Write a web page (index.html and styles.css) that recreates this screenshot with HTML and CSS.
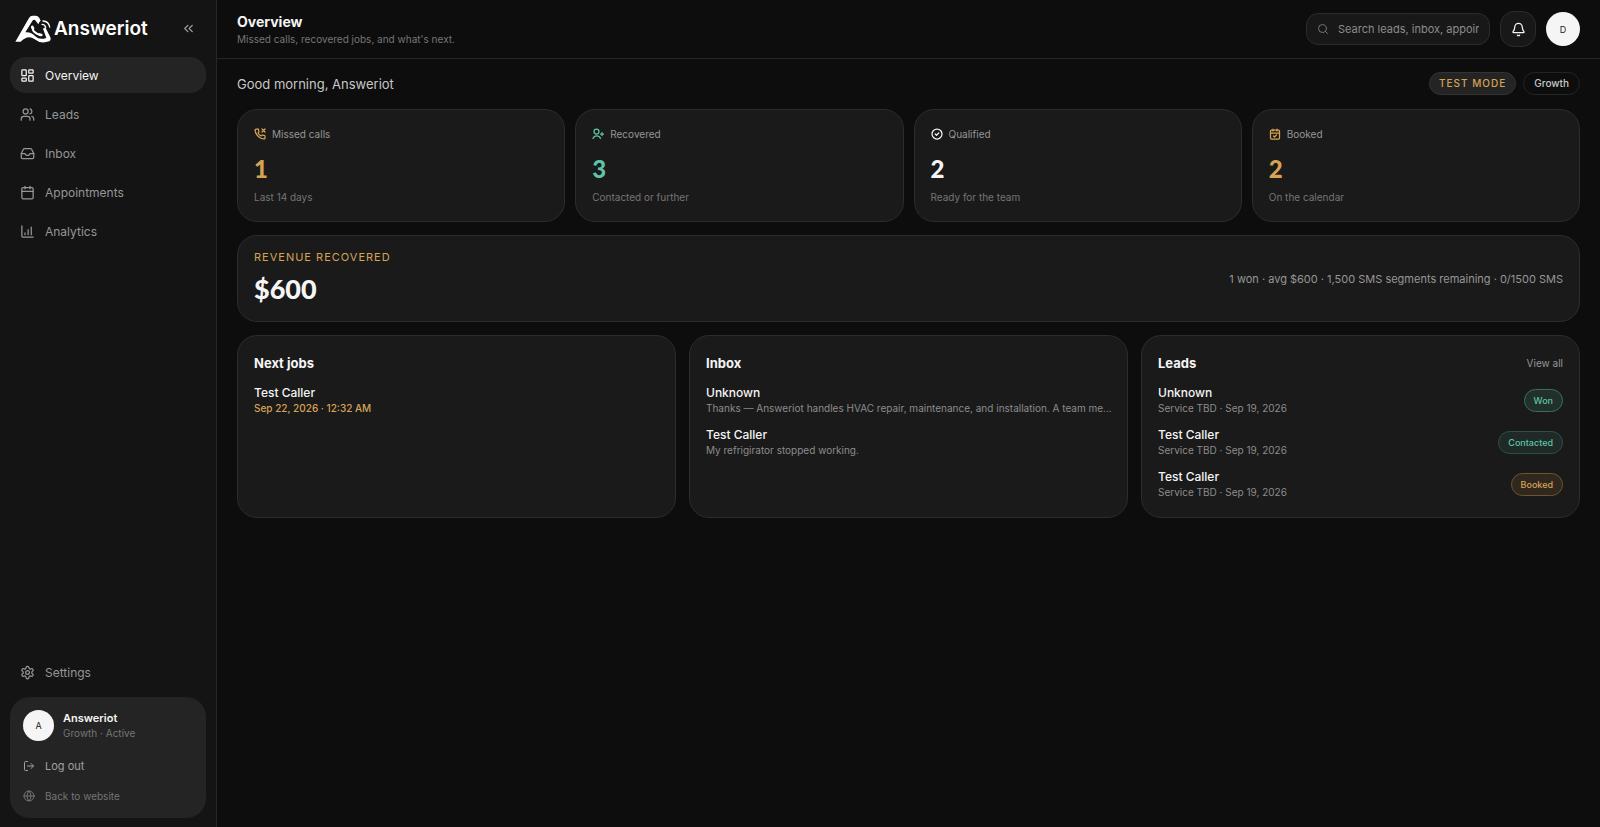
FILE: index.html
```html
<!DOCTYPE html>
<html lang="en">
<head>
  <meta charset="UTF-8" />
  <meta name="viewport" content="width=device-width, initial-scale=1.0"/>
  <title>Overview - Answeriot</title>
  <link rel="stylesheet" href="styles.css">
</head>
<body>

  <aside class="sidebar">
    <div class="brand">
      <a href="#" class="logo">
        <svg class="logo-mark" viewBox="45 43 108 84" aria-hidden="true">
          <path fill="#fff" d="M46 123 L87 52 Q91 45 98 45 H107 Q114 45 118 52 L122 60 Q117 64 115 71 L107 60 Q102 54 97 61 L76 95 Q93 93 106 107 Q118 119 139 112 L129 84 L136 80 L151 110 Q154 118 148 122 Q122 131 104 116 Q84 100 62 123 Z"/>
          <path fill="none" stroke="#fff" stroke-width="6" stroke-linecap="round" d="M97 80 Q99 98 122 103"/>
          <path fill="none" stroke="#fff" stroke-width="8" stroke-linecap="round" d="M97 79 L99 83 M119 102 L124 103"/>
          <path fill="none" stroke="#fff" stroke-width="4" stroke-linecap="round" d="M126 71 Q135 71 137 80 M129 61 Q146 62 149 79"/>
        </svg>
        <span>Answeriot</span>
      </a>
      <button class="collapse" aria-label="Collapse sidebar">
        <svg class="icon" viewBox="0 0 24 24"><path d="m11 17-5-5 5-5M18 17l-5-5 5-5"/></svg>
      </button>
    </div>

    <nav class="nav">
      <a href="#" class="nav-item active">
        <svg class="icon" viewBox="0 0 24 24"><rect x="3" y="3" width="7" height="9" rx="1"/><rect x="14" y="3" width="7" height="5" rx="1"/><rect x="14" y="12" width="7" height="9" rx="1"/><rect x="3" y="16" width="7" height="5" rx="1"/></svg>
        Overview
      </a>
      <a href="#" class="nav-item">
        <svg class="icon" viewBox="0 0 24 24"><path d="M16 21v-2a4 4 0 0 0-4-4H6a4 4 0 0 0-4 4v2M22 21v-2a4 4 0 0 0-3-3.87M16 3.13a4 4 0 0 1 0 7.75"/><circle cx="9" cy="7" r="4"/></svg>
        Leads
      </a>
      <a href="#" class="nav-item">
        <svg class="icon" viewBox="0 0 24 24"><path d="M22 12h-6l-2 3h-4l-2-3H2"/><path d="M5.45 5.11 2 12v6a2 2 0 0 0 2 2h16a2 2 0 0 0 2-2v-6l-3.45-6.89A2 2 0 0 0 16.76 4H7.24a2 2 0 0 0-1.79 1.11z"/></svg>
        Inbox
      </a>
      <a href="#" class="nav-item">
        <svg class="icon" viewBox="0 0 24 24"><path d="M8 2v4M16 2v4M3 10h18"/><rect x="3" y="4" width="18" height="18" rx="2"/></svg>
        Appointments
      </a>
      <a href="#" class="nav-item">
        <svg class="icon" viewBox="0 0 24 24"><path d="M3 3v16a2 2 0 0 0 2 2h16M8 17v-3M13 17V9M18 17V5"/></svg>
        Analytics
      </a>
    </nav>

    <a href="#" class="nav-item settings">
      <svg class="icon" viewBox="0 0 24 24"><path d="M12.22 2h-.44a2 2 0 0 0-2 2v.18a2 2 0 0 1-1 1.73l-.43.25a2 2 0 0 1-2 0l-.15-.08a2 2 0 0 0-2.73.73l-.22.38a2 2 0 0 0 .73 2.73l.15.1a2 2 0 0 1 1 1.72v.51a2 2 0 0 1-1 1.74l-.15.09a2 2 0 0 0-.73 2.73l.22.38a2 2 0 0 0 2.73.73l.15-.08a2 2 0 0 1 2 0l.43.25a2 2 0 0 1 1 1.73V20a2 2 0 0 0 2 2h.44a2 2 0 0 0 2-2v-.18a2 2 0 0 1 1-1.73l.43-.25a2 2 0 0 1 2 0l.15.08a2 2 0 0 0 2.73-.73l.22-.39a2 2 0 0 0-.73-2.73l-.15-.08a2 2 0 0 1-1-1.74v-.5a2 2 0 0 1 1-1.74l.15-.09a2 2 0 0 0 .73-2.73l-.22-.38a2 2 0 0 0-2.73-.73l-.15.08a2 2 0 0 1-2 0l-.43-.25a2 2 0 0 1-1-1.73V4a2 2 0 0 0-2-2z"/><circle cx="12" cy="12" r="3"/></svg>
      Settings
    </a>

    <div class="account">
      <div class="account-head">
        <span class="avatar">A</span>
        <div>
          <div class="account-name">Answeriot</div>
          <div class="account-plan">Growth · Active</div>
        </div>
      </div>
      <button class="account-link logout">
        <svg class="icon" viewBox="0 0 24 24"><path d="M9 21H5a2 2 0 0 1-2-2V5a2 2 0 0 1 2-2h4M16 17l5-5-5-5M21 12H9"/></svg>
        Log out
      </button>
      <a href="#" class="account-link website">
        <svg class="icon" viewBox="0 0 24 24"><circle cx="12" cy="12" r="10"/><path d="M12 2a14.5 14.5 0 0 0 0 20 14.5 14.5 0 0 0 0-20M2 12h20"/></svg>
        Back to website
      </a>
    </div>
  </aside>

  <div class="page">
    <header class="topbar">
      <div class="heading">
        <h1>Overview</h1>
        <p class="subtitle">Missed calls, recovered jobs, and what's next.</p>
      </div>
      <div class="tools">
        <label class="search">
          <svg class="icon" viewBox="0 0 24 24"><circle cx="11" cy="11" r="8"/><path d="m21 21-4.3-4.3"/></svg>
          <input type="text" aria-label="Search" placeholder="Search leads, inbox, appointments">
        </label>
        <button class="bell" aria-label="Notifications">
          <svg class="icon" viewBox="0 0 24 24"><path d="M10.27 21a2 2 0 0 0 3.46 0M3.26 15.33A1 1 0 0 0 4 17h16a1 1 0 0 0 .74-1.67C19.41 13.96 18 12.5 18 8A6 6 0 0 0 6 8c0 4.5-1.41 5.96-2.74 7.33"/></svg>
        </button>
        <button class="avatar user">D</button>
      </div>
    </header>

    <main class="content">
      <div class="greeting">
        <p>Good morning, Answeriot</p>
        <div class="tags">
          <span class="tag tag-test">TEST MODE</span>
          <span class="tag">Growth</span>
        </div>
      </div>

      <section class="stats">
        <div class="card stat amber">
          <div class="stat-label">
            <svg class="icon" viewBox="0 0 24 24"><path d="m16 2 6 6M22 2l-6 6M22 16.92v3a2 2 0 0 1-2.18 2 19.79 19.79 0 0 1-8.63-3.07 19.5 19.5 0 0 1-6-6 19.79 19.79 0 0 1-3.07-8.67A2 2 0 0 1 4.11 2h3a2 2 0 0 1 2 1.72c.13.96.36 1.9.7 2.81a2 2 0 0 1-.45 2.11L8.09 9.91a16 16 0 0 0 6 6l1.27-1.27a2 2 0 0 1 2.11-.45c.91.34 1.85.57 2.81.7A2 2 0 0 1 22 16.92z"/></svg>
            Missed calls
          </div>
          <div class="stat-value">1</div>
          <div class="stat-note">Last 14 days</div>
        </div>
        <div class="card stat green">
          <div class="stat-label">
            <svg class="icon" viewBox="0 0 24 24"><path d="M2 21a8 8 0 0 1 15 0M20 9v6M23 12h-6"/><circle cx="9" cy="7" r="5"/></svg>
            Recovered
          </div>
          <div class="stat-value">3</div>
          <div class="stat-note">Contacted or further</div>
        </div>
        <div class="card stat">
          <div class="stat-label">
            <svg class="icon" viewBox="0 0 24 24"><circle cx="12" cy="12" r="10"/><path d="m8.5 12 2.5 2.5 4.5-4.5"/></svg>
            Qualified
          </div>
          <div class="stat-value">2</div>
          <div class="stat-note">Ready for the team</div>
        </div>
        <div class="card stat amber">
          <div class="stat-label">
            <svg class="icon" viewBox="0 0 24 24"><path d="M8 2v4M16 2v4M3 10h18M9 16l2 2 4-4"/><rect x="3" y="4" width="18" height="18" rx="2"/></svg>
            Booked
          </div>
          <div class="stat-value">2</div>
          <div class="stat-note">On the calendar</div>
        </div>
      </section>

      <section class="card revenue">
        <div>
          <div class="revenue-label">REVENUE RECOVERED</div>
          <div class="revenue-value">$600</div>
        </div>
        <p class="revenue-note">1 won · avg $600 · 1,500 SMS segments remaining · 0/1500 SMS</p>
      </section>

      <section class="panels">
        <div class="card panel">
          <div class="panel-head"><h2>Next jobs</h2></div>
          <div class="row">
            <div class="row-text">
              <div class="row-name">Test Caller</div>
              <div class="row-time">Sep 22, 2026 · 12:32 AM</div>
            </div>
          </div>
        </div>

        <div class="card panel inbox">
          <div class="panel-head"><h2>Inbox</h2></div>
          <div class="row">
            <div class="row-text">
              <div class="row-name">Unknown</div>
              <div class="row-sub">Thanks — Answeriot handles HVAC repair, maintenance, and installation. A team me...</div>
            </div>
          </div>
          <div class="row">
            <div class="row-text">
              <div class="row-name">Test Caller</div>
              <div class="row-sub">My refrigirator stopped working.</div>
            </div>
          </div>
        </div>

        <div class="card panel">
          <div class="panel-head">
            <h2>Leads</h2>
            <a href="#" class="view-all">View all</a>
          </div>
          <div class="row">
            <div class="row-text">
              <div class="row-name">Unknown</div>
              <div class="row-sub">Service TBD · Sep 19, 2026</div>
            </div>
            <span class="status status-won">Won</span>
          </div>
          <div class="row">
            <div class="row-text">
              <div class="row-name">Test Caller</div>
              <div class="row-sub">Service TBD · Sep 19, 2026</div>
            </div>
            <span class="status status-contacted">Contacted</span>
          </div>
          <div class="row">
            <div class="row-text">
              <div class="row-name">Test Caller</div>
              <div class="row-sub">Service TBD · Sep 19, 2026</div>
            </div>
            <span class="status status-booked">Booked</span>
          </div>
        </div>
      </section>
    </main>
  </div>

</body>
</html>
```
FILE: styles.css
```css
* {
  box-sizing: border-box;
}

body {
  margin: 0;
  min-height: 100vh;
  display: flex;
  font-family: Inter, "Liberation Sans", sans-serif;
  font-size: 12px;
  background: #0d0d0d;
  color: #f5f5f5;
}

h1, h2, p {
  margin: 0;
}

a {
  color: inherit;
  text-decoration: none;
}

button {
  padding: 0;
  border: none;
  background: none;
  color: inherit;
  font: inherit;
  cursor: pointer;
}

.icon {
  width: 15px;
  height: 15px;
  flex: none;
  fill: none;
  stroke: currentColor;
  stroke-width: 2;
  stroke-linecap: round;
  stroke-linejoin: round;
}

/* Sidebar */
.sidebar {
  flex: none;
  width: 217px;
  padding: 0 10px 9px;
  display: flex;
  flex-direction: column;
  background: #141414;
  border-right: 1px solid #262626;
}

.brand {
  height: 57px;
  padding: 0 10px 0 5px;
  display: flex;
  align-items: center;
  justify-content: space-between;
}

.logo {
  display: flex;
  align-items: center;
  gap: 3px;
  font-size: 19px;
  font-weight: 600;
  color: #fff;
}

.logo-mark {
  width: 36px;
  height: 28px;
}

.collapse {
  display: flex;
  color: #a0a0a0;
}

.nav {
  display: flex;
  flex-direction: column;
  gap: 3px;
}

.nav-item {
  height: 36px;
  padding: 0 10px;
  display: flex;
  align-items: center;
  gap: 10px;
  border-radius: 16px;
  color: #969696;
}

.nav-item.active {
  background: #242424;
  color: #f5f5f5;
}

.settings {
  margin-top: auto;
  margin-bottom: 7px;
}

.account {
  padding: 13px 13px 7px;
  border-radius: 20px;
  background: #242424;
}

.account-head {
  display: flex;
  align-items: center;
  gap: 9px;
  margin-bottom: 10px;
}

.avatar {
  width: 31px;
  height: 31px;
  flex: none;
  display: flex;
  align-items: center;
  justify-content: center;
  border-radius: 50%;
  background: #f5f5f5;
  color: #1a1a1a;
  font-size: 9px;
}

.account-name {
  font-size: 11px;
  font-weight: 600;
  line-height: 15px;
}

.account-plan {
  font-size: 10px;
  line-height: 15px;
  color: #757575;
}

.account-link {
  height: 30px;
  display: flex;
  align-items: center;
  gap: 10px;
}

.account-link .icon {
  width: 12px;
  height: 12px;
}

.logout {
  font-size: 11px;
  color: #a0a0a0;
}

.website {
  font-size: 10px;
  color: #757575;
}

/* Top bar */
.page {
  flex: 1;
  min-width: 0;
}

.topbar {
  height: 59px;
  padding: 0 20px;
  display: flex;
  align-items: center;
  justify-content: space-between;
  border-bottom: 1px solid #262626;
}

.heading {
  padding-top: 2px;
}

h1 {
  font-size: 14px;
  line-height: 19px;
  font-weight: 700;
}

.subtitle {
  font-size: 10px;
  line-height: 17px;
  color: #757575;
}

.tools {
  display: flex;
  align-items: center;
  gap: 10px;
}

.search {
  width: 184px;
  height: 32px;
  padding: 0 10px;
  display: flex;
  align-items: center;
  gap: 9px;
  border: 1px solid #2c2c2c;
  border-radius: 12px;
  background: #181818;
  color: #757575;
}

.search .icon {
  width: 12px;
  height: 12px;
}

.search input {
  flex: 1;
  min-width: 0;
  padding: 0;
  border: none;
  outline: none;
  background: none;
  color: #f5f5f5;
  font: inherit;
  font-size: 11px;
}

.search input::placeholder {
  color: #8c8c8c;
}

.bell {
  width: 36px;
  height: 36px;
  display: flex;
  align-items: center;
  justify-content: center;
  border: 1px solid #2c2c2c;
  border-radius: 14px;
  background: #181818;
}

.user {
  width: 34px;
  height: 34px;
}

/* Content */
.content {
  padding: 12px 20px 20px;
  display: flex;
  flex-direction: column;
  gap: 13px;
}

.greeting {
  height: 25px;
  display: flex;
  align-items: center;
  justify-content: space-between;
  font-size: 13px;
  color: #c8c8c8;
}

.tags {
  display: flex;
  gap: 7px;
}

.tag {
  padding: 0 10px;
  border: 1px solid #242424;
  border-radius: 12px;
  font-size: 10px;
  line-height: 21px;
  font-weight: 500;
}

.tag-test {
  padding: 0 9px;
  border-color: #333;
  background: #242424;
  color: #d6a354;
  letter-spacing: 1px;
}

.card {
  border: 1px solid #2c2c2c;
  border-radius: 20px;
  background: #1a1a1a;
}

.stats {
  display: grid;
  grid-template-columns: repeat(4, 1fr);
  gap: 10px;
}

.stat {
  padding: 16px;
}

.stat-label {
  display: flex;
  align-items: center;
  gap: 6px;
  font-size: 10px;
  line-height: 16px;
  color: #969696;
}

.stat-label .icon {
  width: 12px;
  height: 12px;
  stroke-width: 2.5;
  color: #f5f5f5;
}

.stat-value {
  margin: 12px 0 5px;
  font-family: Lato, Inter, sans-serif;
  font-size: 24px;
  line-height: 30px;
  font-weight: 900;
}

.stat-note {
  font-size: 10px;
  line-height: 16px;
  color: #757575;
}

.stat.amber .icon,
.amber .stat-value {
  color: #d6a354;
}

.stat.green .icon,
.green .stat-value {
  color: #5fc3a5;
}

.revenue {
  padding: 14px 16px;
  display: flex;
  align-items: center;
  justify-content: space-between;
}

.revenue-label {
  font-size: 11px;
  line-height: 14px;
  letter-spacing: 1px;
  color: #d6a354;
}

.revenue-value {
  margin-top: 7px;
  font-family: Lato, Inter, sans-serif;
  font-size: 27px;
  line-height: 36px;
  font-weight: 900;
}

.revenue-note {
  font-size: 11px;
  color: #969696;
}

/* Panels */
.panels {
  display: grid;
  grid-template-columns: repeat(3, 1fr);
  gap: 13px;
}

.panel {
  min-width: 0;
  padding: 16px 16px 17px;
  display: flex;
  flex-direction: column;
  gap: 11px;
}

.inbox {
  padding-right: 12px;
}

.panel-head {
  display: flex;
  align-items: center;
  justify-content: space-between;
  line-height: 22px;
}

h2 {
  font-size: 13px;
  font-weight: 700;
}

.view-all {
  font-size: 10px;
  color: #969696;
}

.row {
  display: flex;
  align-items: center;
  justify-content: space-between;
}

.row-text {
  min-width: 0;
}

.row-name {
  line-height: 16px;
  font-weight: 500;
}

.row-sub,
.row-time {
  font-size: 10px;
  line-height: 15px;
  overflow: hidden;
  white-space: nowrap;
  text-overflow: ellipsis;
  color: #8c8c8c;
}

.row-time {
  font-weight: 500;
  color: #d6a354;
}

.status {
  padding: 0 9px;
  border: 1px solid;
  border-radius: 12px;
  font-size: 9px;
  line-height: 21px;
  font-weight: 500;
}

.status-won {
  border-color: #37705f;
  background: #22302c;
  color: #5fc3a5;
}

.status-contacted {
  border-color: #2b5147;
  background: #1f2a28;
  color: #5fc3a5;
}

.status-booked {
  border-color: #6b552f;
  background: #30281f;
  color: #d6a354;
}
```
